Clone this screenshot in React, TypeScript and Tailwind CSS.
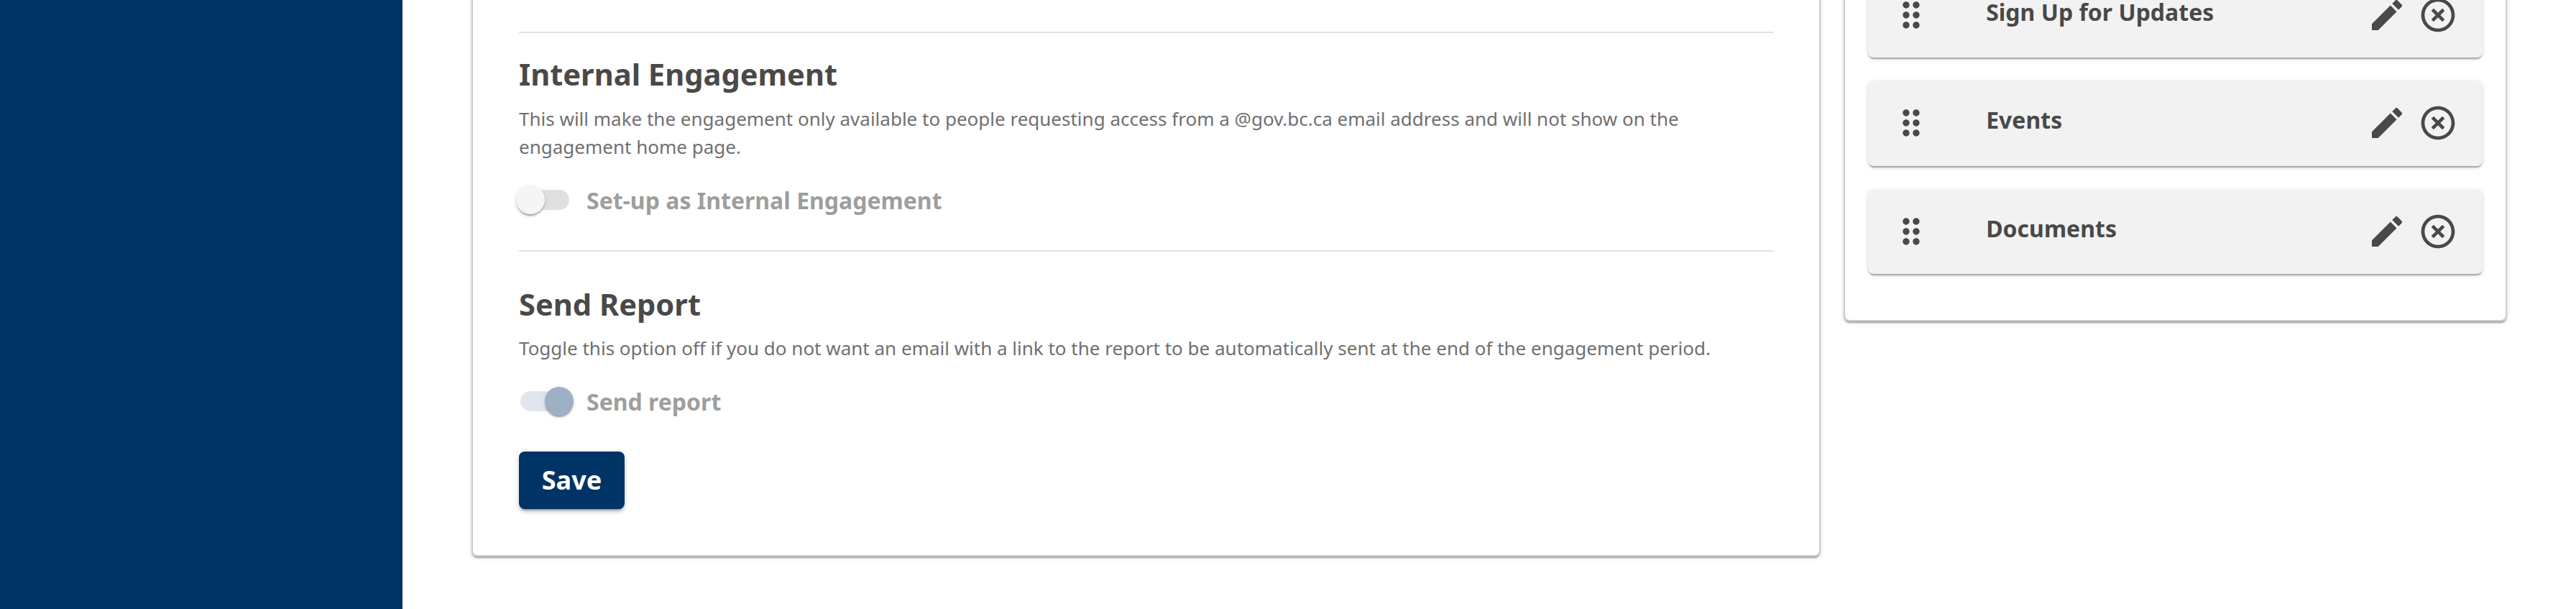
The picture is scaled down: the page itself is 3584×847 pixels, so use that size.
import type { ReactNode } from "react";
import { MdDragIndicator, MdEdit, MdHighlightOff } from "react-icons/md";

const elevation =
  "shadow-[0px_4px_2px_-2px_rgba(0,0,0,0.2),0px_2px_2px_0px_rgba(0,0,0,0.14),0px_2px_6px_0px_rgba(0,0,0,0.12)]";

function Toggle({ on, label }: { on?: boolean; label: string }) {
  return (
    <label className="flex h-[44px] items-center text-[32px] font-bold leading-[43px] text-[#9e9e9e]">
      <span
        className={`relative ml-[2px] mr-[24px] block h-[28px] w-[68px] rounded-full ${on ? "bg-[#e0e6ec]" : "bg-[#e0e0e0]"}`}
      >
        <span
          className={`absolute top-[-6px] h-[40px] w-[40px] rounded-full ${elevation} ${on ? "left-[34px] bg-[#9eb0c6]" : "left-[-6px] bg-[#f5f5f5]"}`}
        />
      </span>
      {label}
    </label>
  );
}

function Section({ title, children }: { title: string; children: ReactNode }) {
  return (
    <section className="flex flex-col">
      <h2 className="text-[41.6px] font-bold leading-[54px]">{title}</h2>
      {children}
    </section>
  );
}

function Widget({ name }: { name: string }) {
  return (
    <li className={`flex h-[118.5px] shrink-0 items-center rounded-[8px] bg-[#f2f2f2] pl-[32px] pr-[34px] ${elevation}`}>
      <MdDragIndicator className="size-[56px]" />
      <span className="ml-[76.5px] flex-1 pb-[8px] text-[32px] font-bold leading-[44px]">{name}</span>
      <span className="flex gap-[15px]">
        <MdEdit className="size-[56px]" />
        <MdHighlightOff className="size-[56px]" />
      </span>
    </li>
  );
}

export default function App() {
  return (
    <div className="flex h-[847px] w-[3584px] items-start overflow-hidden bg-white font-['Noto_Sans',sans-serif] text-[#494949]">
      <nav className="h-full w-[560px] shrink-0 bg-[#003366]" />
      <main className={`-mt-[20px] ml-[96px] h-[794px] w-[1876.67px] shrink-0 rounded-[8px] border-2 border-[#cdcdcd] bg-white px-[64px] pt-[62px] ${elevation}`}>
        <hr className="mb-[30px] h-[2px] border-0 bg-[#e0e0e0]" />
        <Section title="Internal Engagement">
          <p className="mb-[32.5px] mt-[15.5px] text-[26px] leading-[39px] text-[#707070]">
            This will make the engagement only available to people requesting access from a @gov.bc.ca email address and will not show on the engagement home page.
          </p>
          <Toggle label="Set-up as Internal Engagement" />
        </Section>
        <hr className="mb-[46px] mt-[48px] h-[2px] border-0 bg-[#e0e0e0]" />
        <Section title="Send Report">
          <p className="mb-[32.5px] mt-[14.5px] text-[26px] leading-[39px] text-[#707070]">
            Toggle this option off if you do not want an email with a link to the report to be automatically sent at the end of the engagement period.
          </p>
          <Toggle on label="Send report" />
        </Section>
        <button className="mt-[48px] flex h-[80px] w-[147px] items-center justify-center rounded-[8px] bg-[#003366] text-[36px] font-bold text-white shadow-[0px_6px_2px_-4px_rgba(0,0,0,0.2),0px_4px_4px_0px_rgba(0,0,0,0.14),0px_2px_10px_0px_rgba(0,0,0,0.12)]">
          Save
        </button>
      </main>
      <aside className={`-mt-[73px] ml-[32px] h-[520px] w-[923px] shrink-0 rounded-[8px] border-2 border-[#cdcdcd] bg-white px-[32px] pt-[32.5px] ${elevation}`}>
        <ul className="flex flex-col gap-[32px]">
          <Widget name="Sign Up for Updates" />
          <Widget name="Events" />
          <Widget name="Documents" />
        </ul>
      </aside>
    </div>
  );
}
